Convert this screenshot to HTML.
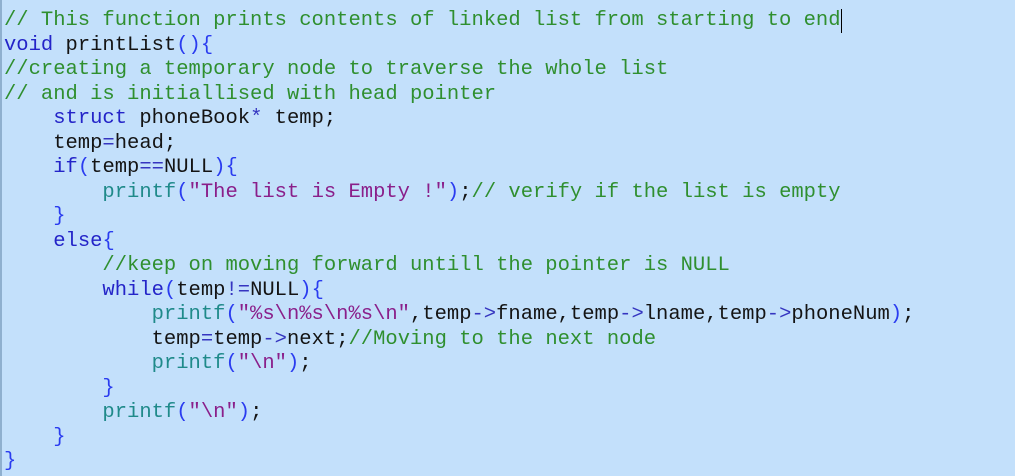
<!DOCTYPE html>
<html><head><style>
html,body{margin:0;padding:0;}
body{width:1015px;height:476px;background:#c3e0fb;overflow:hidden;position:relative;}
.bar{position:absolute;left:0;top:0;width:2px;height:476px;background:#8fb0cf;}
pre{margin:0;position:absolute;left:4px;top:9px;font-family:"Liberation Mono",monospace;font-size:20.5px;line-height:24.5px;color:#141414;}
.c{color:#2f8f2f}.k{color:#2424c8}.p{color:#2a3cf0}.f{color:#1f8a8a}.s{color:#8a1f8a}.o{color:#3535c0}
.cur{display:inline-block;width:1px;height:24px;background:#000;vertical-align:top;}
</style></head><body><div class="bar"></div><pre><span class="c">// This function prints contents of linked list from starting to end</span><span class="cur"></span>
<span class="k">void</span> printList<span class="p">(){</span>
<span class="c">//creating a temporary node to traverse the whole list</span>
<span class="c">// and is initiallised with head pointer</span>
    <span class="k">struct</span> phoneBook<span class="o">*</span> temp;
    temp<span class="o">=</span>head;
    <span class="k">if</span><span class="p">(</span>temp<span class="o">==</span>NULL<span class="p">){</span>
        <span class="f">printf</span><span class="p">(</span><span class="s">"The list is Empty !"</span><span class="p">)</span>;<span class="c">// verify if the list is empty</span>
    <span class="p">}</span>
    <span class="k">else</span><span class="p">{</span>
        <span class="c">//keep on moving forward untill the pointer is NULL</span>
        <span class="k">while</span><span class="p">(</span>temp<span class="o">!=</span>NULL<span class="p">){</span>
            <span class="f">printf</span><span class="p">(</span><span class="s">"%s\n%s\n%s\n"</span>,temp<span class="o">-&gt;</span>fname,temp<span class="o">-&gt;</span>lname,temp<span class="o">-&gt;</span>phoneNum<span class="p">)</span>;
            temp<span class="o">=</span>temp<span class="o">-&gt;</span>next;<span class="c">//Moving to the next node</span>
            <span class="f">printf</span><span class="p">(</span><span class="s">"\n"</span><span class="p">)</span>;
        <span class="p">}</span>
        <span class="f">printf</span><span class="p">(</span><span class="s">"\n"</span><span class="p">)</span>;
    <span class="p">}</span>
<span class="p">}</span></pre></body></html>
